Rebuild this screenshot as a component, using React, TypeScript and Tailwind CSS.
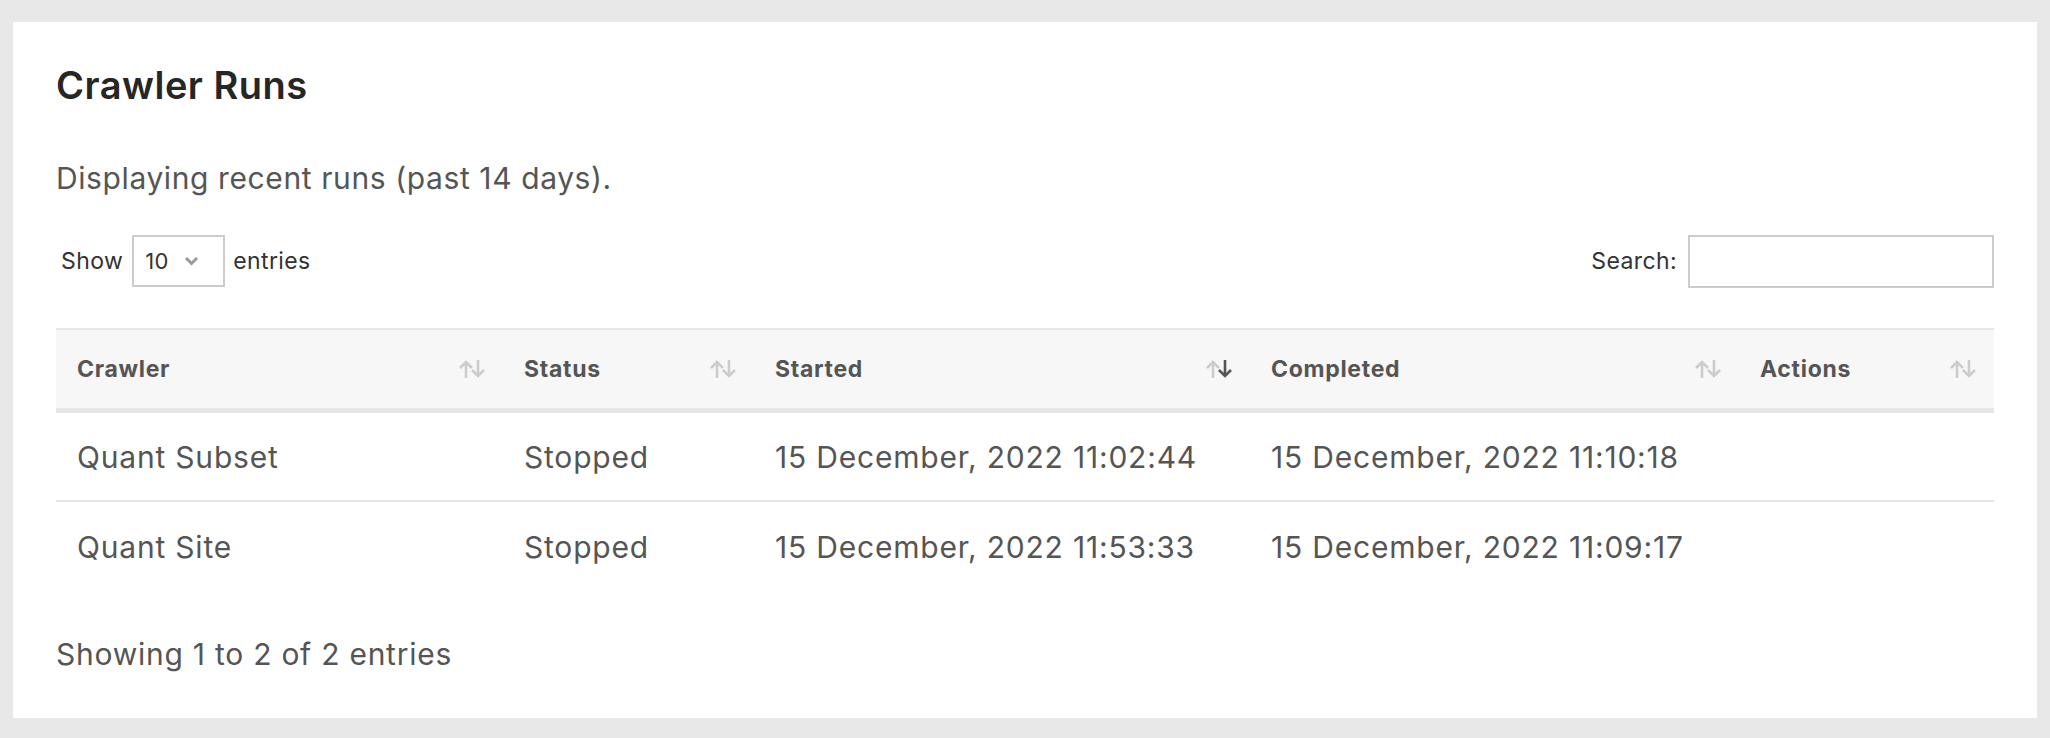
import React from 'react';

type Run = {
  crawler: string;
  status: string;
  started: string;
  completed: string;
};

const runs: Run[] = [
  { crawler: 'Quant Subset', status: 'Stopped', started: '15 December, 2022 11:02:44', completed: '15 December, 2022 11:10:18' },
  { crawler: 'Quant Site', status: 'Stopped', started: '15 December, 2022 11:53:33', completed: '15 December, 2022 11:09:17' },
];

// 排序图标: active = 'desc' 时下箭头变深
function SortIcon({ active }: { active?: 'desc' }) {
  return (
    <svg width="28" height="20" viewBox="0 0 28 20" fill="none" strokeWidth="2.6" strokeLinecap="butt" strokeLinejoin="miter">
      <g stroke="#cccccc">
        <path d="M8 19V3" />
        <path d="M2 9l6-6 6 6" />
      </g>
      <g stroke={active === 'desc' ? '#555555' : '#cccccc'}>
        <path d="M20 1v16" />
        <path d="M14 11l6 6 6-6" />
      </g>
    </svg>
  );
}

const columns: { label: string; active?: 'desc' }[] = [
  { label: 'Crawler' },
  { label: 'Status' },
  { label: 'Started', active: 'desc' },
  { label: 'Completed' },
  { label: 'Actions' },
];

const gridCols = 'grid grid-cols-[447px_251px_496px_489px_255px]';

export default function App() {
  return (
    <div
      className="min-h-[738px] bg-[#e8e8e8] pl-[13px] pr-[13px] pt-[22px] pb-[20px]"
      style={{ fontFamily: 'Inter, "Noto Sans", sans-serif' }}
    >
      <div className="bg-white h-[696px] px-[43px] pt-[41px]">
        <h1 className="text-[38px] leading-[44px] font-semibold text-[#262626] tracking-[0.5px]">Crawler Runs</h1>
        <p className="mt-[53px] text-[30px] leading-[36px] text-[#555555] tracking-[0.6px]">
          Displaying recent runs (past 14 days).
        </p>

        {/* 控件行 */}
        <div className="mt-[39px] flex items-center justify-between h-[52px]">
          <div className="flex items-center text-[23px] tracking-[0.4px] text-[#333333] pl-[5px]">
            <span>Show</span>
            <div className="ml-[9px] mr-[8px] w-[93px] h-[52px] border-2 border-[#cccccc] flex items-center justify-between pl-[11px] pr-[24px]">
              <span className="text-[22px]">10</span>
              <svg width="15" height="10" viewBox="0 0 15 10" fill="none">
                <path d="M2 2l5.5 5.5L13 2" stroke="#999999" strokeWidth="3" />
              </svg>
            </div>
            <span>entries</span>
          </div>
          <div className="flex items-center text-[23px] tracking-[0.4px] text-[#333333]">
            <span>Search:</span>
            <input className="ml-[11px] w-[306px] h-[53px] border-2 border-[#cccccc] outline-none" />
          </div>
        </div>

        {/* 表格 */}
        <div className="mt-[41px] w-[1938px]">
          <div className={`${gridCols} h-[85px] bg-[#f7f7f7] border-t-2 border-b-[5px] border-[#e6e6e6]`}>
            {columns.map((c) => (
              <div
                key={c.label}
                className="flex items-center justify-between pl-[21px] pr-[17px] text-[23px] tracking-[0.7px] font-bold text-[#555555]"
              >
                <span>{c.label}</span>
                <SortIcon active={c.active} />
              </div>
            ))}
          </div>
          {runs.map((r, i) => (
            <div
              key={r.crawler}
              className={`${gridCols} h-[89px] ${i === 0 ? 'border-b-2 border-[#e6e6e6]' : ''}`}
            >
              {[r.crawler, r.status, r.started, r.completed, ''].map((v, j) => (
                <div
                  key={j}
                  className="flex items-center pl-[21px] pt-[1px] text-[30px] tracking-[0.8px] text-[#555555] whitespace-nowrap"
                >
                  {v}
                </div>
              ))}
            </div>
          ))}
        </div>

        <p className="mt-[45px] text-[30px] leading-[36px] tracking-[0.75px] text-[#555555]">Showing 1 to 2 of 2 entries</p>
      </div>
    </div>
  );
}
